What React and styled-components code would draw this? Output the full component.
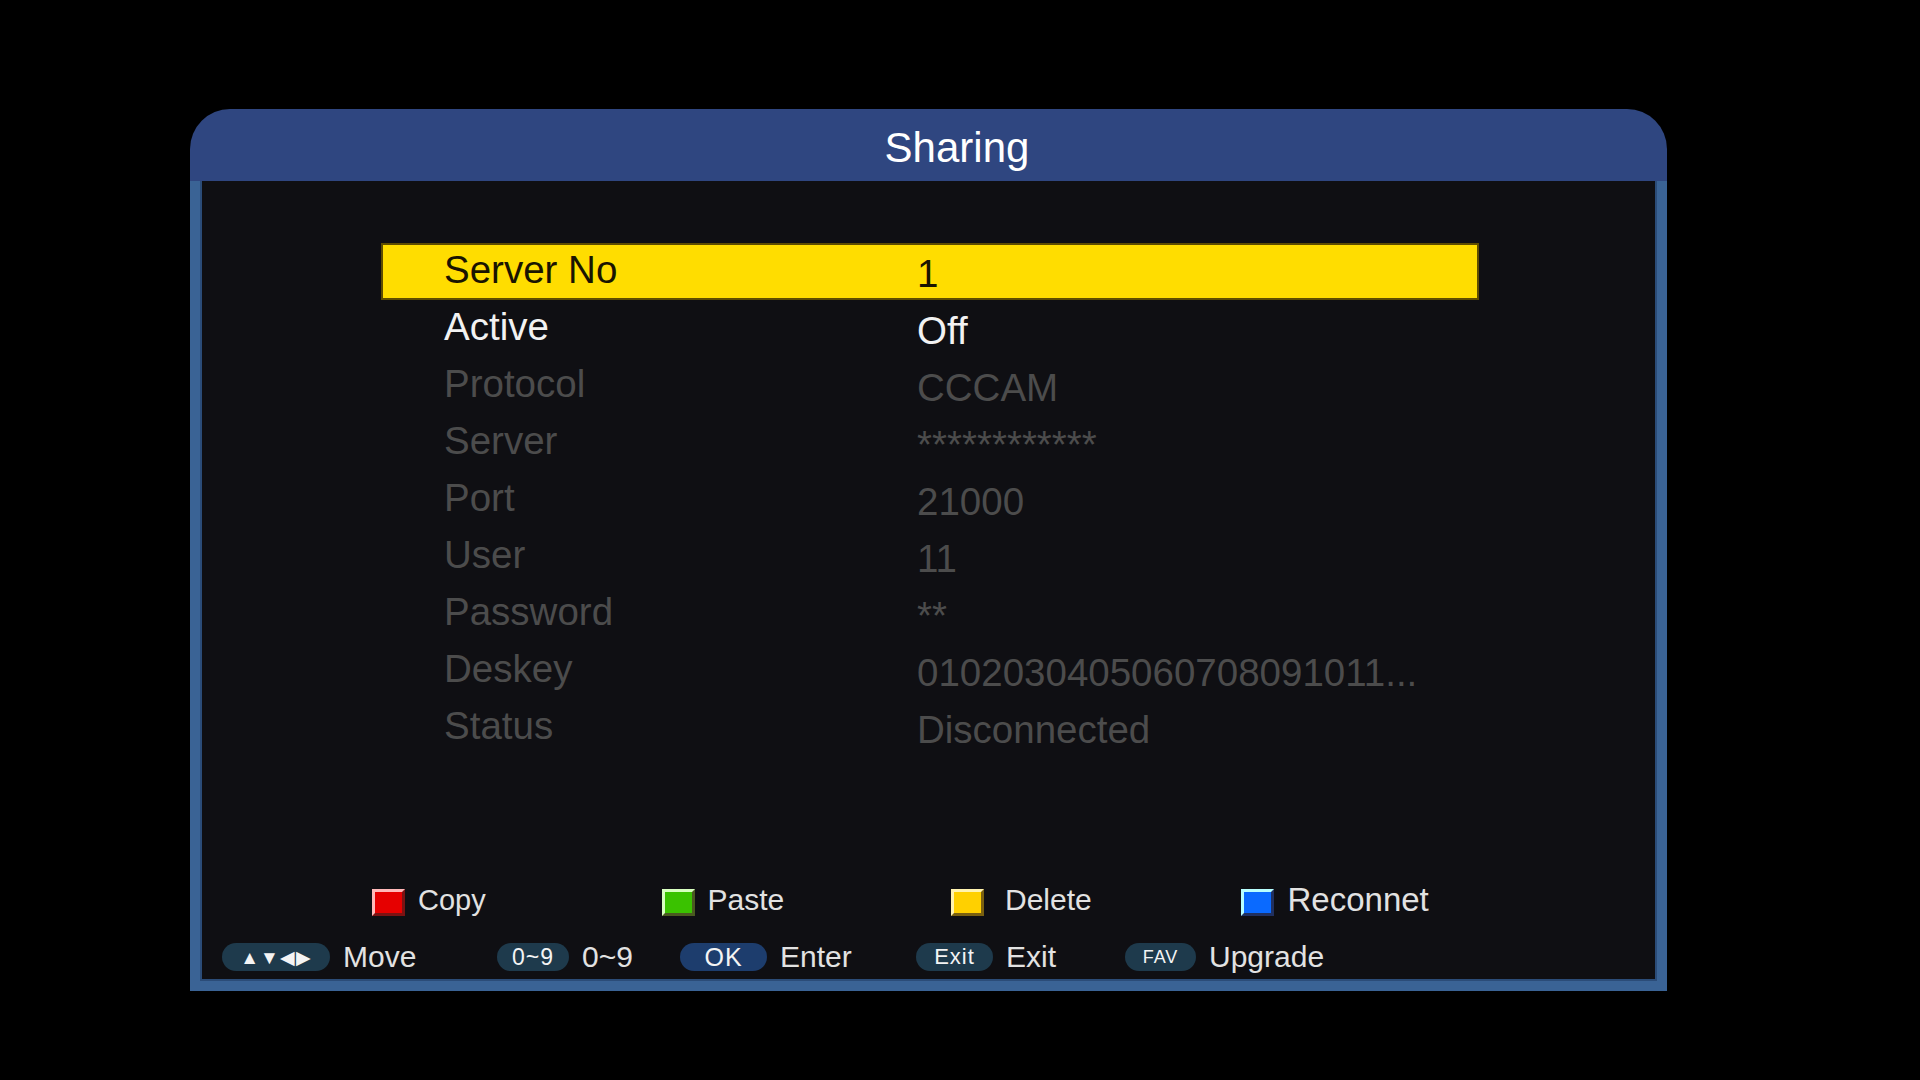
import styled, {createGlobalStyle} from "styled-components"

const rows = [
  {label: "Server No", value: "1", state: "selected"},
  {label: "Active", value: "Off", state: "normal"},
  {label: "Protocol", value: "CCCAM", state: "disabled"},
  {label: "Server", value: "************", state: "disabled"},
  {label: "Port", value: "21000", state: "disabled"},
  {label: "User", value: "11", state: "disabled"},
  {label: "Password", value: "**", state: "disabled"},
  {label: "Deskey", value: "0102030405060708091011...", state: "disabled"},
  {label: "Status", value: "Disconnected", state: "disabled"},
]

const colorKeys = [
  {color: "red", text: "Copy", gap: 13, size: 29},
  {color: "green", text: "Paste", gap: 13, size: 30},
  {color: "yellow", text: "Delete", gap: 21, size: 30},
  {color: "blue", text: "Reconnet", gap: 14, size: 33},
]

const hotKeys = [
  {key: "▲▼◀▶", text: "Move", width: 275, pill: 108, tone: "teal", size: 19},
  {key: "0~9", text: "0~9", width: 183, pill: 72, tone: "teal", size: 23},
  {key: "OK", text: "Enter", width: 236, pill: 87, tone: "blue", size: 25},
  {key: "Exit", text: "Exit", width: 209, pill: 77, tone: "teal", size: 22},
  {key: "FAV", text: "Upgrade", width: 260, pill: 71, tone: "teal", size: 18},
]

export default function App() {
  return (
    <>
      <GlobalStyle/>
      <Screen>
        <Panel>
          <Header>Sharing</Header>
          <Body>
            <List>
              {rows.map((r) => (
                <Row key={r.label} state={r.state}>
                  <Label>{r.label}</Label>
                  <Value>{r.value}</Value>
                </Row>
              ))}
            </List>

            <Footer>
              <ColorRow>
                {colorKeys.map((k) => (
                  <ColorItem key={k.text} $gap={k.gap} $size={k.size}>
                    <Swatch color={k.color}/>
                    <span>{k.text}</span>
                  </ColorItem>
                ))}
              </ColorRow>
              <KeyRow>
                {hotKeys.map((k) => (
                  <KeyItem key={k.text} $w={k.width}>
                    <Pill $w={k.pill} tone={k.tone} $size={k.size}>{k.key}</Pill>
                    <span>{k.text}</span>
                  </KeyItem>
                ))}
              </KeyRow>
            </Footer>
          </Body>
        </Panel>
      </Screen>
    </>
  )
}

const GlobalStyle = createGlobalStyle`
  html, body {
    margin: 0;
    padding: 0;
    background: #000;
  }
  body {
    font-family: "Liberation Sans", Arial, sans-serif;
  }
`

const Screen = styled.div`
  width: 1920px;
  height: 1080px;
  background: #000;
  padding: 109px 0 0 190px;
  box-sizing: border-box;
`

const Panel = styled.div`
  width: 1477px;
  display: flex;
  flex-direction: column;
`

const Header = styled.div`
  height: 72px;
  box-sizing: border-box;
  background: #2f4680;
  border-radius: 40px 40px 0 0;
  display: flex;
  align-items: center;
  justify-content: center;
  padding: 6px 0 0 57px;
  color: #fff;
  font-size: 42px;
`

const Body = styled.div`
  height: 810px;
  box-sizing: border-box;
  background: #0f0f13;
  border: 10px solid #3a6395;
  border-top: none;
  box-shadow: inset 2px 0 0 #2b4c78, inset -2px 0 0 #2b4c78, inset 0 -2px 0 #2b4c78;
  display: flex;
  flex-direction: column;
  padding: 62px 0 10px 0;
`

const List = styled.div`
  margin-left: 181px;
  width: 1098px;
  display: flex;
  flex-direction: column;
`

const rowColors = {
  selected: "#1a1400",
  normal: "#f2f2f2",
  disabled: "#4c4c4c",
}

const Row = styled.div`
  height: 57px;
  box-sizing: border-box;
  display: flex;
  align-items: center;
  padding-left: 63px;
  font-size: 38.5px;
  color: ${(p) => rowColors[p.state]};
  background: ${(p) => (p.state === "selected" ? "#ffdd00" : "transparent")};
  box-shadow: ${(p) => (p.state === "selected" ? "inset 0 0 0 2px #5e4d00" : "none")};
`

const Label = styled.div`
  width: 473px;
  padding-bottom: 3px;
`

const Value = styled.div`
  padding-top: 4px;
`

const Footer = styled.div`
  margin-top: auto;
  display: flex;
  flex-direction: column;
  gap: 21px;
  color: #e2e2e2;
`

const ColorRow = styled.div`
  margin-left: 172px;
  height: 40px;
  display: grid;
  grid-template-columns: repeat(4, 289.5px);
  align-items: center;
`

const ColorItem = styled.div`
  display: flex;
  align-items: center;
  gap: ${(p) => p.$gap}px;
  font-size: ${(p) => p.$size}px;

  span {
    margin-top: -4px;
  }
`

const swatches = {
  red: ["#e60000", "#ffb9b9", "#7c1212"],
  green: ["#3ac200", "#d8ffc0", "#4a5a20"],
  yellow: ["#ffd000", "#fff3b0", "#7a6010"],
  blue: ["#0a6aff", "#b8ffff", "#203060"],
}

const Swatch = styled.div`
  width: 33px;
  height: 27px;
  flex-shrink: 0;
  box-sizing: border-box;
  background: ${(p) => swatches[p.color][0]};
  border: 3px solid;
  border-color: ${(p) => `${swatches[p.color][1]} ${swatches[p.color][2]} ${swatches[p.color][2]} ${swatches[p.color][1]}`};
`

const KeyRow = styled.div`
  margin-left: 22px;
  height: 28px;
  display: flex;
  align-items: center;
  font-size: 30px;
`

const KeyItem = styled.div`
  width: ${(p) => p.$w}px;
  flex-shrink: 0;
  display: flex;
  align-items: center;
  gap: 13px;
`

const Pill = styled.div`
  width: ${(p) => p.$w}px;
  height: 28px;
  border-radius: 14px;
  background: ${(p) => (p.tone === "blue" ? "#1d3d6d" : "#1e3a4c")};
  color: #f4f4f4;
  display: flex;
  align-items: center;
  justify-content: center;
  font-size: ${(p) => p.$size}px;
  letter-spacing: 1px;
`
